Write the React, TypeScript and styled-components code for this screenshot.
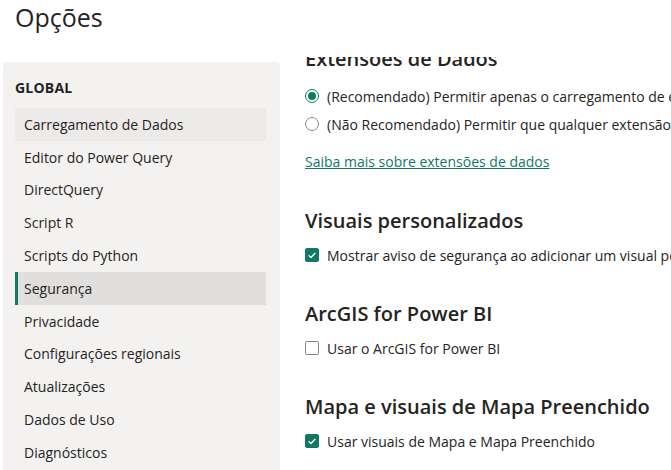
import { useState } from "react";
import styled, { createGlobalStyle } from "styled-components";

const GlobalStyle = createGlobalStyle`
  body {
    margin: 0;
    background: #ffffff;
    font-family: "Open Sans", "Noto Sans", sans-serif;
    color: #252423;
    overflow: hidden;
  }
`;

const Page = styled.div`
  width: 671px;
  height: 470px;
  overflow: hidden;
  display: flex;
  flex-direction: column;
`;

const Title = styled.h1`
  margin: 0;
  height: 57px;
  padding: 0 0 0 15px;
  font-size: 25px;
  font-weight: 400;
  line-height: 35px;
  color: #252423;
`;

const Body = styled.div`
  flex: 1;
  display: flex;
  min-height: 0;
`;

const Sidebar = styled.nav`
  width: 276px;
  flex: none;
  margin: 5px 0 0 3px;
  padding: 14px 13px 0 12px;
  box-sizing: border-box;
  background: #f3f2f1;
  border-radius: 4px 4px 0 0;
  box-shadow: 1px 0 1px rgba(0, 0, 0, 0.06);
`;

const Group = styled.div`
  font-size: 14px;
  font-weight: 700;
  letter-spacing: 0.2px;
  color: #252423;
  height: 23px;
  line-height: 23px;
  margin-bottom: 9px;
`;

const NavItem = styled.div<{ $active: boolean; $hover: boolean }>`
  height: 32.8px;
  display: flex;
  align-items: center;
  padding-left: ${(p) => (p.$active ? "6px" : "9px")};
  border-left: ${(p) => (p.$active ? "3px solid #117865" : "none")};
  background: ${(p) =>
    p.$active ? "#e1dfdd" : p.$hover ? "#edebe9" : "transparent"};
  font-size: 14px;
  color: #252423;
  cursor: pointer;
  white-space: nowrap;
`;

const Content = styled.main`
  flex: 1;
  min-width: 0;
  overflow: hidden;
  margin-left: 26px;
`;

const Scroller = styled.div<{ $offset: number }>`
  margin-top: ${(p) => -p.$offset}px;
`;

const Section = styled.section`
  & + & {
    margin-top: 31px;
  }
`;

const Heading = styled.h2<{ $gap?: number }>`
  margin: 0 0 ${(p) => p.$gap ?? 6}px;
  font-size: 20px;
  font-weight: 600;
  line-height: 28px;
  color: #252423;
  white-space: nowrap;
`;

const Option = styled.label`
  height: 28px;
  display: flex;
  align-items: center;
  gap: 8px;
  font-size: 14px;
  color: #252423;
  white-space: nowrap;
  cursor: pointer;
`;

const Radio = styled.span<{ $on: boolean }>`
  flex: none;
  width: 14px;
  height: 14px;
  box-sizing: border-box;
  border-radius: 50%;
  border: 1px solid ${(p) => (p.$on ? "#117865" : "#8a8886")};
  display: flex;
  align-items: center;
  justify-content: center;
  &::after {
    content: "";
    width: 8px;
    height: 8px;
    border-radius: 50%;
    background: ${(p) => (p.$on ? "#117865" : "transparent")};
  }
`;

const Box = styled.span<{ $on: boolean }>`
  flex: none;
  width: 14px;
  height: 14px;
  box-sizing: border-box;
  border-radius: 2px;
  border: 1px solid ${(p) => (p.$on ? "#117865" : "#8a8886")};
  background: ${(p) => (p.$on ? "#117865" : "#ffffff")};
  display: flex;
  align-items: center;
  justify-content: center;
`;

const Link = styled.a`
  display: block;
  margin-top: 10px;
  height: 28px;
  line-height: 28px;
  font-size: 14px;
  color: #117865;
  text-decoration: underline;
  white-space: nowrap;
`;

const Check = () => (
  <svg width="8" height="7" viewBox="0 0 8 7">
    <path
      d="M1 3.6 L3 5.5 L7 1.3"
      fill="none"
      stroke="#ffffff"
      strokeWidth="1.3"
      strokeLinecap="round"
      strokeLinejoin="round"
    />
  </svg>
);

const menu = [
  "Carregamento de Dados",
  "Editor do Power Query",
  "DirectQuery",
  "Script R",
  "Scripts do Python",
  "Segurança",
  "Privacidade",
  "Configurações regionais",
  "Atualizações",
  "Dados de Uso",
  "Diagnósticos",
  "Configurações de Recursos Visuais",
];

const App = () => {
  const [selected, setSelected] = useState("Segurança");
  const [radio, setRadio] = useState(0);
  const [checks, setChecks] = useState({ visual: true, arcgis: false, mapa: true });

  const toggle = (k: keyof typeof checks) =>
    setChecks((c) => ({ ...c, [k]: !c[k] }));

  return (
    <Page>
      <GlobalStyle />
      <Title>Opções</Title>
      <Body>
        <Sidebar>
          <Group>GLOBAL</Group>
          {menu.map((item, i) => (
            <NavItem
              key={item}
              $active={item === selected}
              $hover={i === 0}
              onClick={() => setSelected(item)}
            >
              {item}
            </NavItem>
          ))}
        </Sidebar>
        <Content>
          <Scroller $offset={12}>
            <Section>
              <Heading $gap={9}>Extensões de Dados</Heading>
              <Option onClick={() => setRadio(0)}>
                <Radio $on={radio === 0} />
                (Recomendado) Permitir apenas o carregamento de extensões
                certificadas e outras extensões confiáveis
              </Option>
              <Option onClick={() => setRadio(1)}>
                <Radio $on={radio === 1} />
                (Não Recomendado) Permitir que qualquer extensão seja carregada
                sem validação ou aviso
              </Option>
              <Link href="#">Saiba mais sobre extensões de dados</Link>
            </Section>
            <Section>
              <Heading>Visuais personalizados</Heading>
              <Option onClick={() => toggle("visual")}>
                <Box $on={checks.visual}>{checks.visual && <Check />}</Box>
                Mostrar aviso de segurança ao adicionar um visual personalizado
                a um relatório
              </Option>
            </Section>
            <Section>
              <Heading>ArcGIS for Power BI</Heading>
              <Option onClick={() => toggle("arcgis")}>
                <Box $on={checks.arcgis}>{checks.arcgis && <Check />}</Box>
                Usar o ArcGIS for Power BI
              </Option>
            </Section>
            <Section>
              <Heading>Mapa e visuais de Mapa Preenchido</Heading>
              <Option onClick={() => toggle("mapa")}>
                <Box $on={checks.mapa}>{checks.mapa && <Check />}</Box>
                Usar visuais de Mapa e Mapa Preenchido
              </Option>
            </Section>
          </Scroller>
        </Content>
      </Body>
    </Page>
  );
};

export default App;
